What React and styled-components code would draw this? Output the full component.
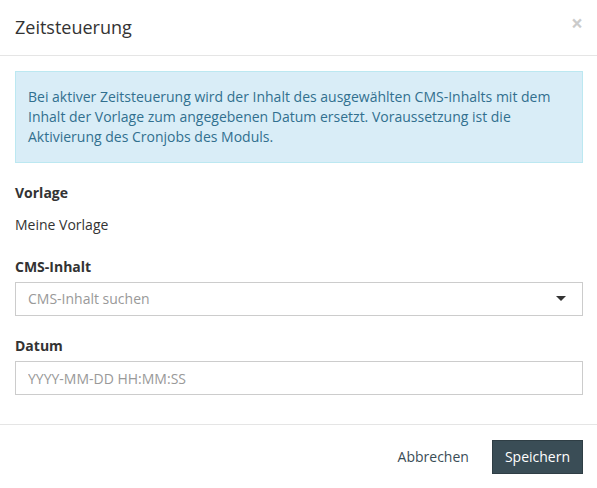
import React from "react";
import styled, { createGlobalStyle } from "styled-components";

const GlobalStyle = createGlobalStyle`
  * { box-sizing: border-box; }
  body {
    margin: 0;
    background: #fff;
    font-family: "Open Sans", "Liberation Sans", sans-serif;
    font-size: 14px;
    line-height: 20px;
    color: #333;
  }
`;

const Modal = styled.div`
  width: 597px;
  background: #fff;
`;

const Header = styled.div`
  position: relative;
  padding: 15px;
  border-bottom: 1px solid #e5e5e5;
`;

const Title = styled.h4`
  margin: 0;
  font-size: 18px;
  font-weight: 400;
  line-height: 25px;
  color: #333;
`;

const Close = styled.button`
  position: absolute;
  top: 13px;
  right: 14px;
  padding: 0;
  border: 0;
  background: none;
  font-family: "Open Sans", "Liberation Sans", sans-serif;
  font-size: 21px;
  font-weight: 700;
  line-height: 20px;
  color: #000;
  opacity: 0.2;
  cursor: pointer;
`;

const Body = styled.div`
  padding: 15px 14px 15px 15px;
`;

const Alert = styled.div`
  padding: 15px 12px;
  margin-bottom: 20px;
  background: #d9edf7;
  border: 1px solid #bce8f1;
  color: #31708f;
`;

const Group = styled.div`
  margin-bottom: ${(p) => p.$gap || 15}px;
`;

const Label = styled.label`
  display: block;
  margin-bottom: 5px;
  font-weight: 700;
`;

const Static = styled.p`
  margin: 0;
  padding: 7px 0;
`;

const Field = styled.div`
  position: relative;
  display: flex;
  align-items: center;
  height: 34px;
  padding: 6px 12px;
  border: 1px solid #ccc;
  color: #999;
`;

const Input = styled.input`
  width: 100%;
  height: 34px;
  padding: 6px 12px;
  border: 1px solid #ccc;
  border-radius: 0;
  font-family: inherit;
  font-size: 14px;
  color: #555;
  outline: none;
  &::placeholder { color: #999; }
`;

const Caret = styled.span`
  position: absolute;
  right: 16px;
  top: 13px;
  width: 0;
  height: 0;
  border-left: 5px solid transparent;
  border-right: 5px solid transparent;
  border-top: 5px solid #333;
`;

const Footer = styled.div`
  display: flex;
  justify-content: flex-end;
  gap: 10px;
  padding: 15px 14px 15px 15px;
  border-top: 1px solid #e5e5e5;
`;

const Button = styled.button`
  height: 34px;
  padding: 6px 12px;
  border: 1px solid ${(p) => (p.$primary ? "#2f3e45" : "transparent")};
  border-radius: 0;
  background: ${(p) => (p.$primary ? "#3a4d56" : "transparent")};
  color: ${(p) => (p.$primary ? "#fff" : "#3a4d56")};
  font-family: inherit;
  font-size: 14px;
  line-height: 20px;
  cursor: pointer;
`;

export default function App() {
  return (
    <>
      <GlobalStyle />
      <Modal>
        <Header>
          <Title>Zeitsteuerung</Title>
          <Close>×</Close>
        </Header>
        <Body>
          <Alert>
            Bei aktiver Zeitsteuerung wird der Inhalt des ausgewählten CMS-Inhalts mit dem
            Inhalt der Vorlage zum angegebenen Datum ersetzt. Voraussetzung ist die
            Aktivierung des Cronjobs des Moduls.
          </Alert>
          <Group>
            <Label>Vorlage</Label>
            <Static>Meine Vorlage</Static>
          </Group>
          <Group $gap={20}>
            <Label>CMS-Inhalt</Label>
            <Field>
              CMS-Inhalt suchen
              <Caret />
            </Field>
          </Group>
          <Group $gap={14}>
            <Label>Datum</Label>
            <Input placeholder="YYYY-MM-DD HH:MM:SS" />
          </Group>
        </Body>
        <Footer>
          <Button>Abbrechen</Button>
          <Button $primary>Speichern</Button>
        </Footer>
      </Modal>
    </>
  );
}
